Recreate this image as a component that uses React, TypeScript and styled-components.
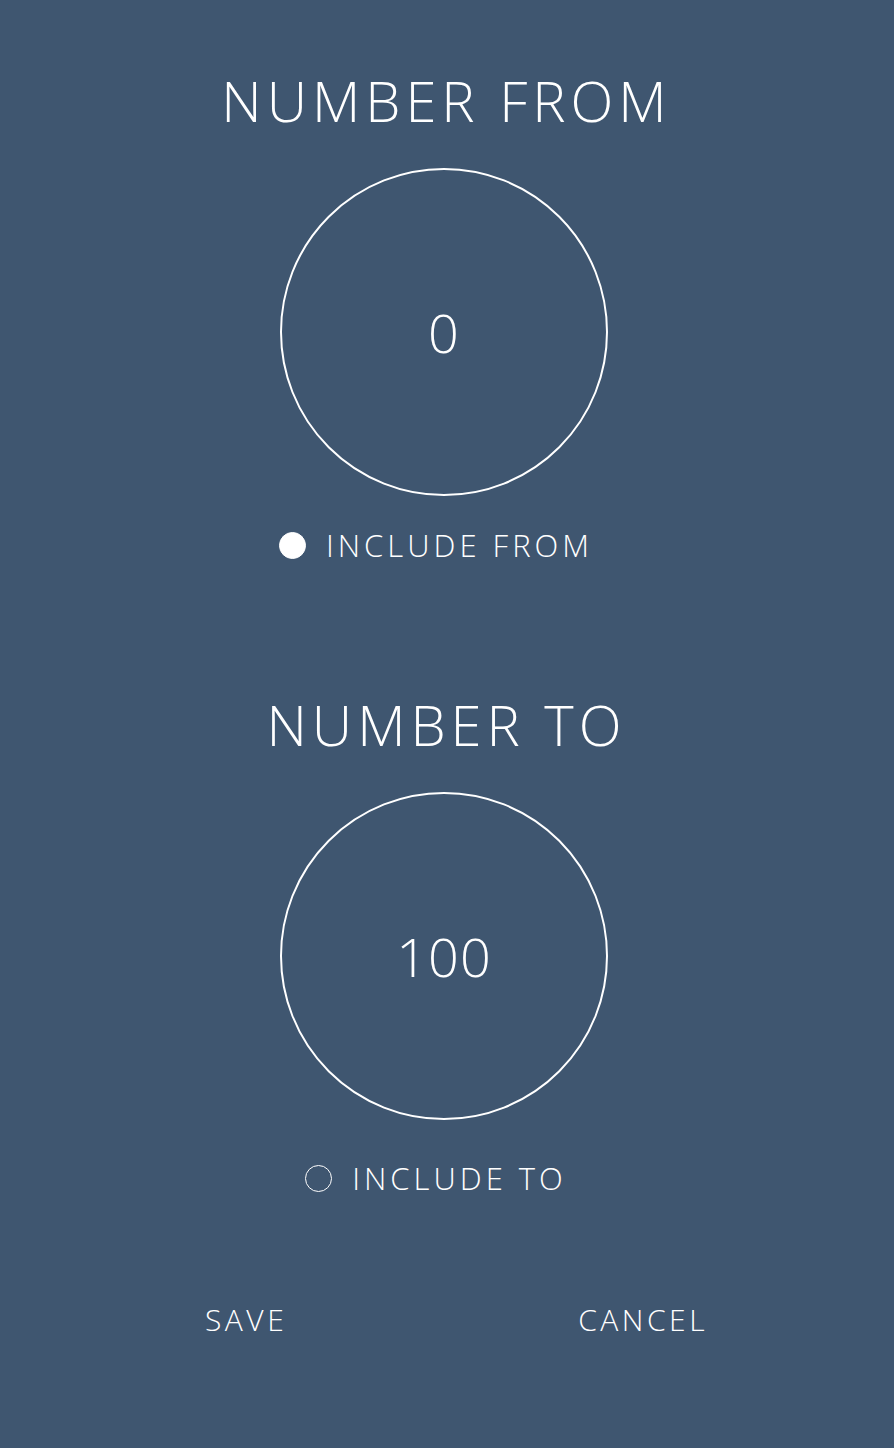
import React, { useState } from "react";
import styled, { createGlobalStyle } from "styled-components";

const Global = createGlobalStyle`
  html, body { margin: 0; padding: 0; background: #3f5670; }
  body { font-family: "Open Sans", "Lato", sans-serif; color: #ffffff; }
`;

const Page = styled.div`
  width: 894px;
  height: 1448px;
  background: #3f5670;
  display: flex;
  flex-direction: column;
  align-items: center;
  padding-top: 68px;
  padding-right: 6px;
  box-sizing: border-box;
`;

const Section = styled.section<{ $gapAfter: number }>`
  display: flex;
  flex-direction: column;
  align-items: center;
  margin-bottom: ${(p) => p.$gapAfter}px;
`;

const Title = styled.h1`
  margin: 0;
  font-size: 56px;
  line-height: 64px;
  font-weight: 300;
  letter-spacing: 5px;
  padding-left: 5px;
  color: #fff;
`;

const Dial = styled.div`
  margin-top: 36px;
  width: 328px;
  height: 328px;
  border: 2px solid #fff;
  border-radius: 50%;
  box-sizing: border-box;
  display: flex;
  align-items: center;
  justify-content: center;
  font-size: 54px;
  font-weight: 300;
  letter-spacing: 1px;
`;

const IncludeRow = styled.label<{ $top: number }>`
  margin-top: ${(p) => p.$top}px;
  display: flex;
  align-items: center;
  gap: 20px;
  padding-right: 16px;
  font-size: 31px;
  font-weight: 300;
  line-height: 40px;
  letter-spacing: 4px;
  cursor: pointer;
`;

const Radio = styled.span<{ $on: boolean }>`
  width: 27px;
  height: 27px;
  border-radius: 50%;
  box-sizing: border-box;
  border: 1.5px solid #fff;
  background: ${(p) => (p.$on ? "#fff" : "transparent")};
`;

const Actions = styled.div`
  width: 794px;
  margin-left: 22px;
  display: flex;
  justify-content: space-around;
`;

const Button = styled.button`
  background: none;
  border: none;
  color: #fff;
  font-family: inherit;
  font-size: 30px;
  font-weight: 300;
  letter-spacing: 3.5px;
  padding: 0 0 0 3px;
  cursor: pointer;
`;

export default function App() {
  const [fromOn, setFromOn] = useState(true);
  const [toOn, setToOn] = useState(false);
  return (
    <>
      <Global />
      <Page>
        <Section $gapAfter={127}>
          <Title>NUMBER FROM</Title>
          <Dial>0</Dial>
          <IncludeRow $top={29} onClick={() => setFromOn(!fromOn)}>
            <Radio $on={fromOn} />
            INCLUDE FROM
          </IncludeRow>
        </Section>
        <Section $gapAfter={101}>
          <Title>NUMBER TO</Title>
          <Dial>100</Dial>
          <IncludeRow $top={38} onClick={() => setToOn(!toOn)}>
            <Radio $on={toOn} />
            INCLUDE TO
          </IncludeRow>
        </Section>
        <Actions>
          <Button>SAVE</Button>
          <Button>CANCEL</Button>
        </Actions>
      </Page>
    </>
  );
}
